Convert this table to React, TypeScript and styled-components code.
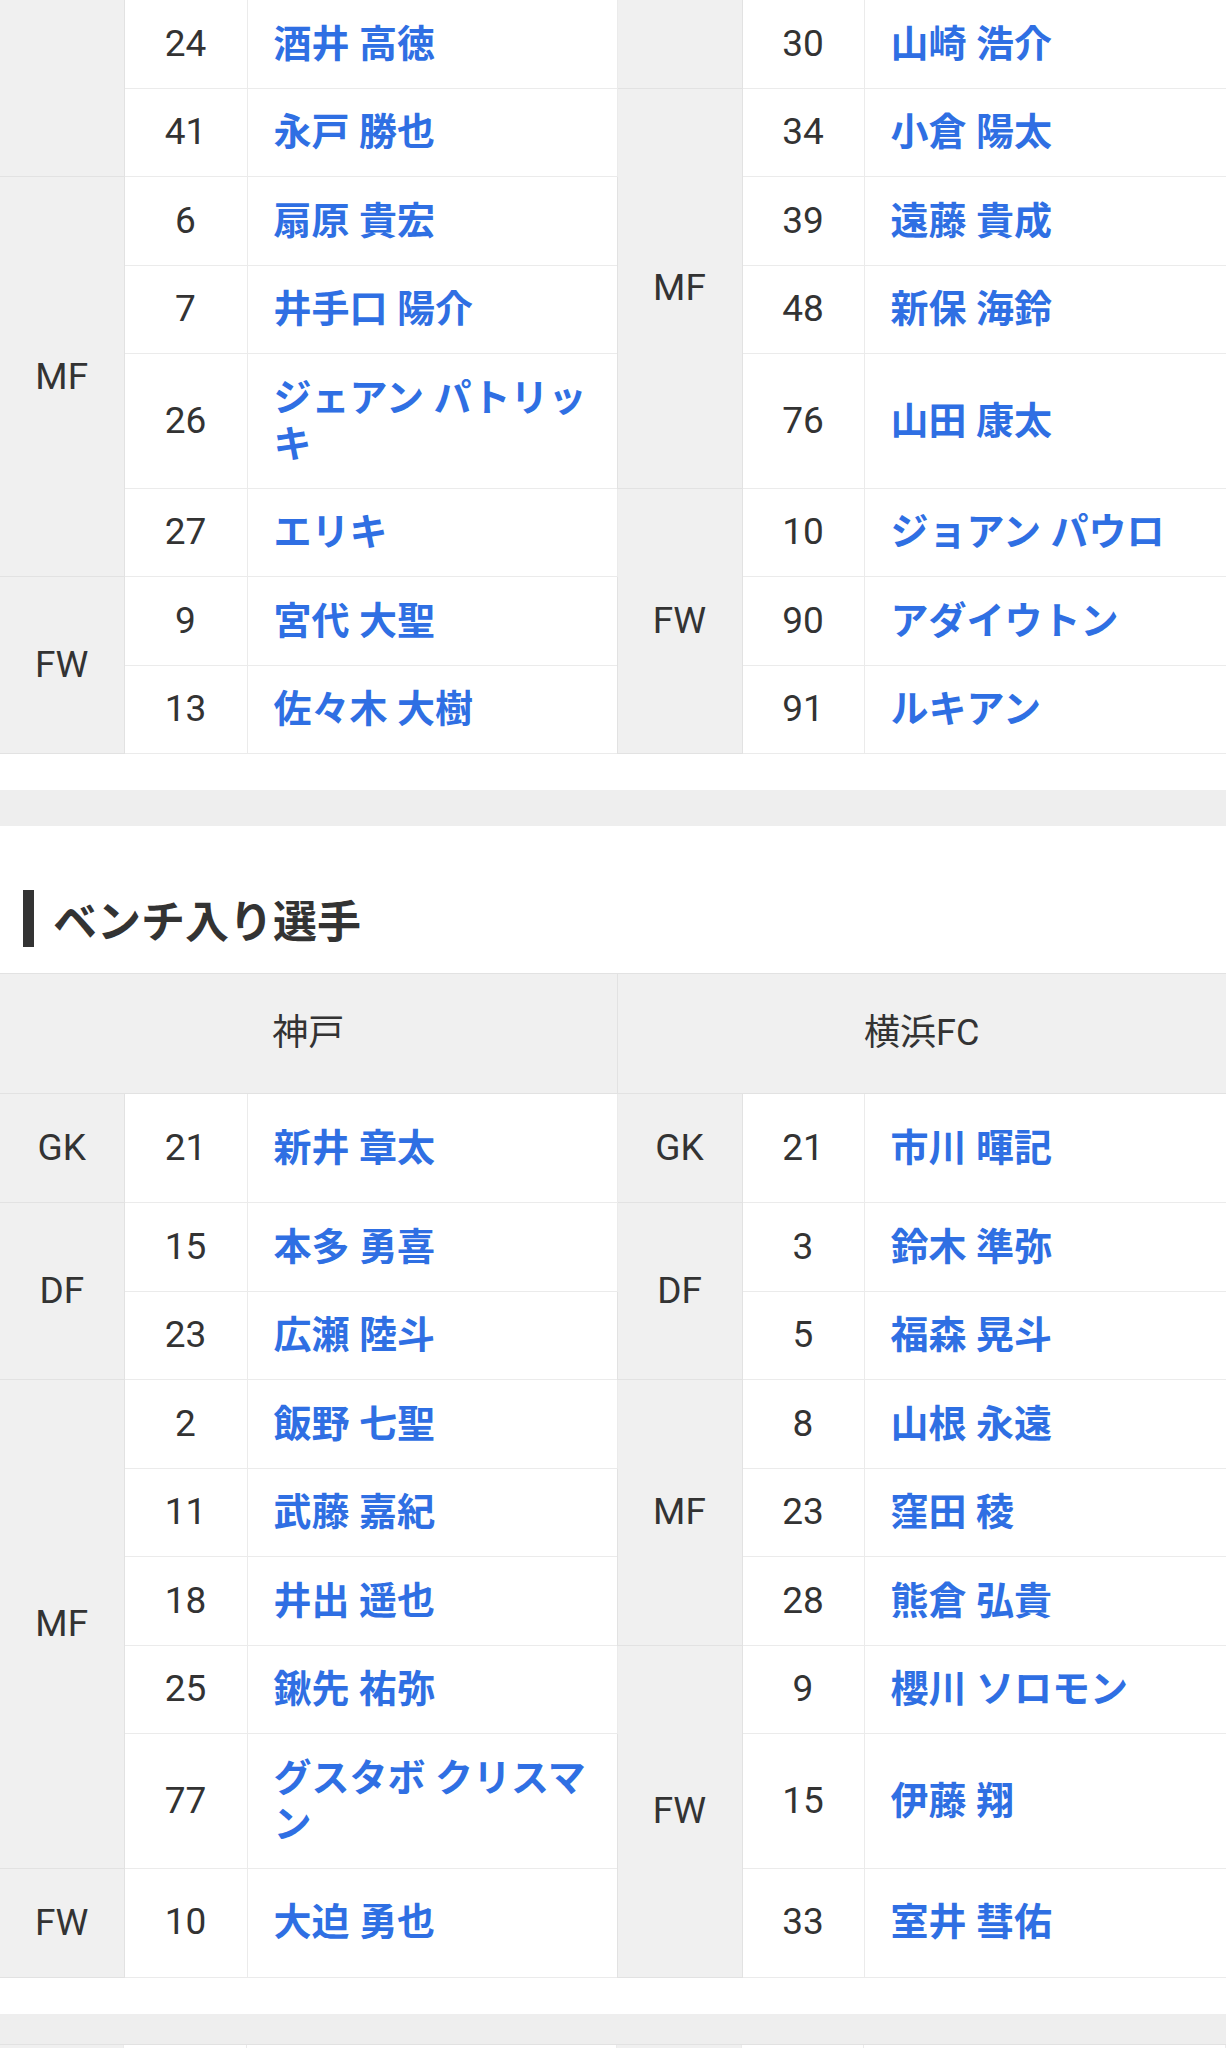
import React from "react";
import styled, { createGlobalStyle } from "styled-components";

const GlobalStyle = createGlobalStyle`
  html, body {
    margin: 0;
    padding: 0;
    background: #fff;
    overflow: hidden;
  }
  body {
    font-family: Roboto, "Noto Sans CJK JP", sans-serif;
    color: #333;
  }
`;

type Player = [number, string];
type Group = { pos: string; cut?: boolean; players: Player[] };
type RowCell = { num: number; name: string; group?: Group };

const COLS = [124, 123, 370, 125, 122, 362];

const starters: { left: Group[]; right: Group[] } = {
  left: [
    { pos: "", cut: true, players: [[24, "酒井 高徳"], [41, "永戸 勝也"]] },
    {
      pos: "MF",
      players: [
        [6, "扇原 貴宏"],
        [7, "井手口 陽介"],
        [26, "ジェアン パトリッキ"],
        [27, "エリキ"],
      ],
    },
    { pos: "FW", players: [[9, "宮代 大聖"], [13, "佐々木 大樹"]] },
  ],
  right: [
    { pos: "", cut: true, players: [[30, "山崎 浩介"]] },
    {
      pos: "MF",
      players: [
        [34, "小倉 陽太"],
        [39, "遠藤 貴成"],
        [48, "新保 海鈴"],
        [76, "山田 康太"],
      ],
    },
    {
      pos: "FW",
      players: [
        [10, "ジョアン パウロ"],
        [90, "アダイウトン"],
        [91, "ルキアン"],
      ],
    },
  ],
};

const bench: { left: Group[]; right: Group[] } = {
  left: [
    { pos: "GK", players: [[21, "新井 章太"]] },
    { pos: "DF", players: [[15, "本多 勇喜"], [23, "広瀬 陸斗"]] },
    {
      pos: "MF",
      players: [
        [2, "飯野 七聖"],
        [11, "武藤 嘉紀"],
        [18, "井出 遥也"],
        [25, "鍬先 祐弥"],
        [77, "グスタボ クリスマン"],
      ],
    },
    { pos: "FW", players: [[10, "大迫 勇也"]] },
  ],
  right: [
    { pos: "GK", players: [[21, "市川 暉記"]] },
    { pos: "DF", players: [[3, "鈴木 準弥"], [5, "福森 晃斗"]] },
    {
      pos: "MF",
      players: [
        [8, "山根 永遠"],
        [23, "窪田 稜"],
        [28, "熊倉 弘貴"],
      ],
    },
    {
      pos: "FW",
      players: [
        [9, "櫻川 ソロモン"],
        [15, "伊藤 翔"],
        [33, "室井 彗佑"],
      ],
    },
  ],
};

const Page = styled.div`
  display: flex;
  flex-direction: column;
  width: 1226px;
`;

const Table = styled.table<{ $flushTop?: boolean }>`
  width: 100%;
  border-collapse: collapse;
  table-layout: fixed;
  border-left: hidden;
  border-right: hidden;
  ${({ $flushTop }) => ($flushTop ? "border-top: hidden;" : "")}
`;

const Col = styled.col<{ $w: number }>`
  width: ${({ $w }) => $w}px;
`;

const HeadCell = styled.th`
  background: #f0f0f0;
  border: 1px solid #e2e2e2;
  padding: 36px 0 37px;
  font-size: 36px;
  line-height: 46px;
  font-weight: 400;
  color: #333;
  text-align: center;
`;

const PosCell = styled.td<{ $cut?: boolean }>`
  background: #f0f0f0;
  border: 1px solid #e2e2e2;
  padding: ${({ $cut }) => ($cut ? "0" : "31px 0")};
  font-size: 37px;
  line-height: 46px;
  color: #333;
  text-align: center;
`;

const NumCell = styled.td`
  border: 1px solid #ebebeb;
  padding: 20.5px 0 21px;
  font-size: 37px;
  line-height: 46px;
  color: #333;
  text-align: center;
`;

const NameCell = styled.td`
  border: 1px solid #ebebeb;
  padding: 20.5px 26px 21px;
  font-size: 38px;
  line-height: 46px;
  font-weight: 700;
`;

const NameLink = styled.a`
  color: #2f6fe3;
  text-decoration: none;
`;

const Gap = styled.div<{ $h: number }>`
  height: ${({ $h }) => $h}px;
`;

const Band = styled.div<{ $h: number }>`
  height: ${({ $h }) => $h}px;
  background: #eeeeee;
`;

const SectionTitle = styled.h2`
  display: flex;
  align-items: center;
  gap: 19px;
  height: 57px;
  margin: 64px 0 26px;
  padding-left: 23px;
  font-size: 44px;
  font-weight: 700;
  color: #333;

  &::before {
    content: "";
    width: 11px;
    height: 57px;
    background: #333;
  }
`;

const Strip = styled.div`
  display: grid;
  grid-template-columns: ${COLS.map((w) => `${w}px`).join(" ")};
  height: 6px;
  border-top: 1px solid #e2e2e2;
`;

const StripCell = styled.div<{ $gray?: boolean }>`
  background: ${({ $gray }) => ($gray ? "#f0f0f0" : "#fff")};
  border-right: 1px solid #ebebeb;
`;

const toRows = (groups: Group[]): RowCell[] =>
  groups.flatMap((g) =>
    g.players.map(([num, name], i) => ({ num, name, group: i === 0 ? g : undefined }))
  );

function Side({ cell }: { cell: RowCell }) {
  return (
    <>
      {cell.group && (
        <PosCell rowSpan={cell.group.players.length} $cut={cell.group.cut}>
          {cell.group.pos}
        </PosCell>
      )}
      <NumCell>{cell.num}</NumCell>
      <NameCell>
        <NameLink href="#">{cell.name}</NameLink>
      </NameCell>
    </>
  );
}

function LineupTable({
  left,
  right,
  teams,
  flushTop,
}: {
  left: Group[];
  right: Group[];
  teams?: [string, string];
  flushTop?: boolean;
}) {
  const l = toRows(left);
  const r = toRows(right);
  return (
    <Table $flushTop={flushTop}>
      <colgroup>
        {COLS.map((w, i) => (
          <Col key={i} $w={w} />
        ))}
      </colgroup>
      {teams && (
        <thead>
          <tr>
            <HeadCell colSpan={3}>{teams[0]}</HeadCell>
            <HeadCell colSpan={3}>{teams[1]}</HeadCell>
          </tr>
        </thead>
      )}
      <tbody>
        {l.map((cell, i) => (
          <tr key={i}>
            <Side cell={cell} />
            <Side cell={r[i]} />
          </tr>
        ))}
      </tbody>
    </Table>
  );
}

export default function App() {
  return (
    <>
      <GlobalStyle />
      <Page>
        <LineupTable left={starters.left} right={starters.right} flushTop />
        <Gap $h={36} />
        <Band $h={36} />
        <SectionTitle>ベンチ入り選手</SectionTitle>
        <LineupTable left={bench.left} right={bench.right} teams={["神戸", "横浜FC"]} />
        <Gap $h={36} />
        <Band $h={30} />
        <Strip>
          {COLS.map((_, i) => (
            <StripCell key={i} $gray={i % 3 === 0} />
          ))}
        </Strip>
      </Page>
    </>
  );
}
